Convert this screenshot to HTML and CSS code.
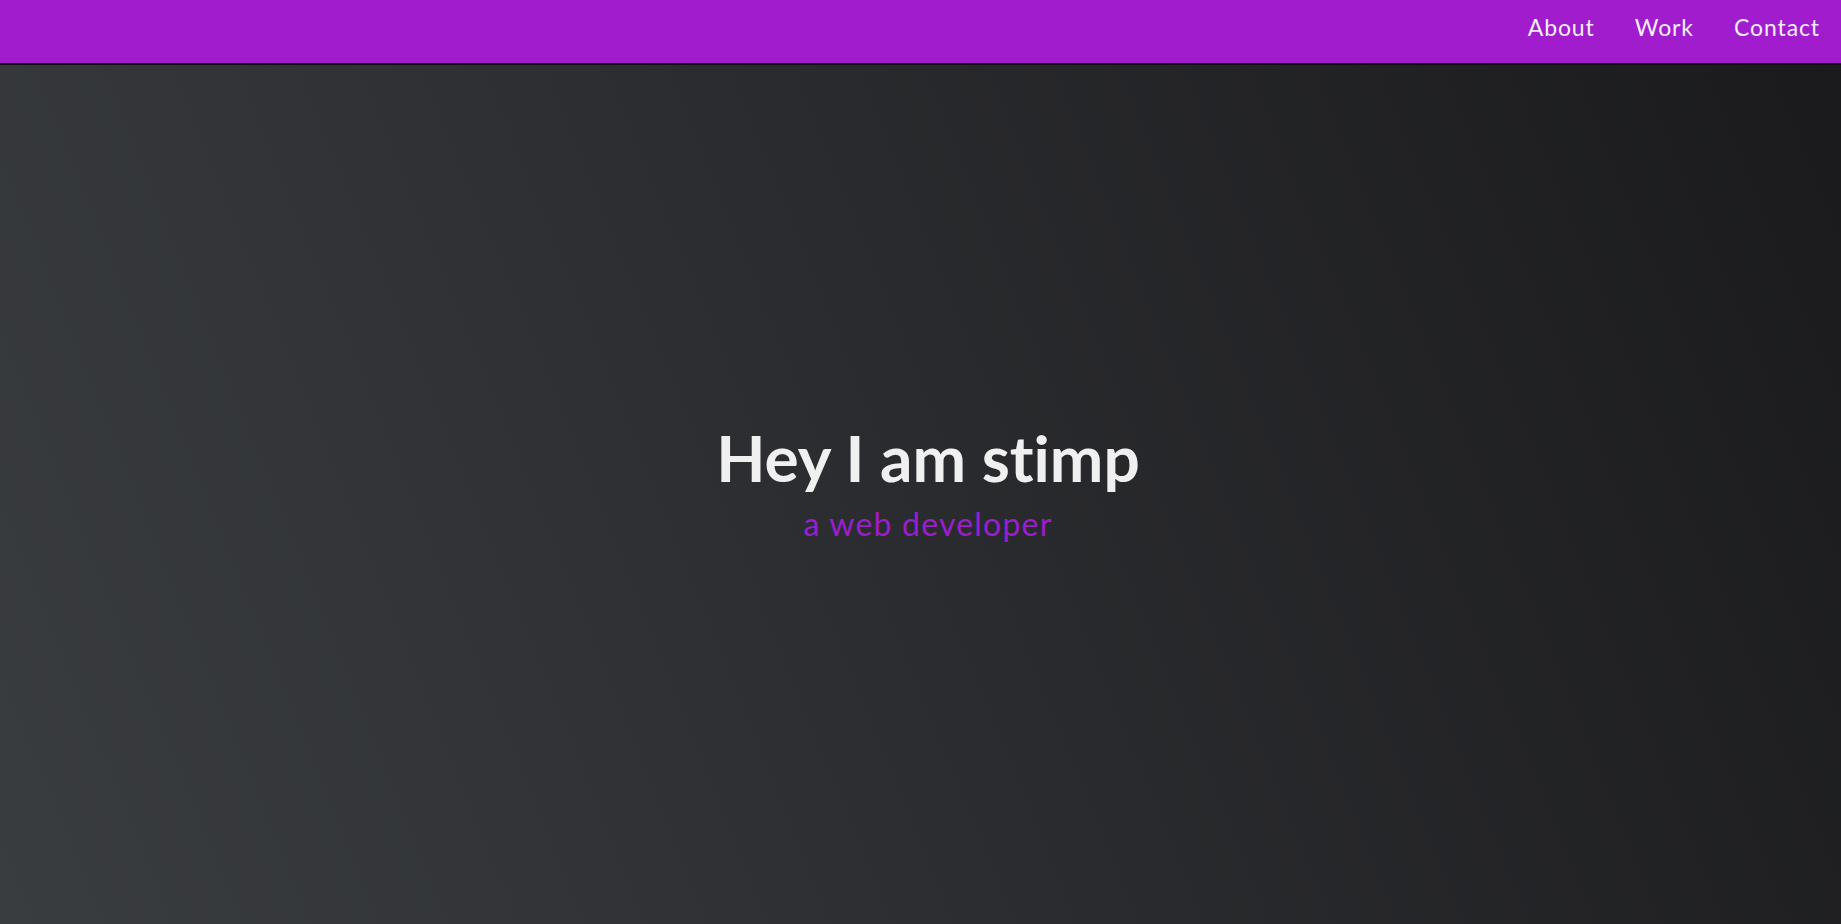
FILE: index.html
```html
<!DOCTYPE html>
<html lang="en">
<head>
<meta charset="utf-8">
<title>stimp</title>
<link rel="stylesheet" href="styles.css">
</head>
<body>
<header class="nav">
  <nav class="nav-links">
    <a href="#about" class="nav-link">About</a>
    <a href="#work" class="nav-link">Work</a>
    <a href="#contact" class="nav-link">Contact</a>
  </nav>
</header>
<main class="hero">
  <div class="hero-text">
    <h1 class="hero-title">Hey I am stimp</h1>
    <p class="hero-sub">a web developer</p>
  </div>
</main>
</body>
</html>
```
FILE: styles.css
```css
* { box-sizing: border-box; }
html, body { margin: 0; padding: 0; height: 100%; }
body {
  display: flex;
  flex-direction: column;
  background: linear-gradient(68deg, #3a3d40 0%, #2a2b2e 50%, #1a1a1c 100%);
  font-family: "Lato", "Open Sans", sans-serif;
  font-variant-ligatures: none;
  overflow: hidden;
}
.nav {
  height: 65px;
  background: #a01ccd;
  border-bottom: 2px solid #0d0d0f;
  display: flex;
  justify-content: flex-end;
  align-items: center;
  padding-right: 21px;
  flex: none;
}
.nav-links {
  display: flex;
  gap: 40px;
  padding-bottom: 10px;
}
.nav-link {
  color: #f4eef8;
  text-decoration: none;
  font-family: "Lato", sans-serif;
  font-size: 23px;
  letter-spacing: 0.9px;
}
.hero {
  flex: 1;
  display: flex;
  align-items: center;
  justify-content: center;
  padding-left: 15px;
  padding-bottom: 23px;
}
.hero-text { text-align: center; }
.hero-title {
  margin: 0;
  color: #f0f0f0;
  font-family: "Lato", sans-serif;
  font-weight: 700;
  font-size: 64px;
  line-height: 1.1;
}
.hero-sub {
  margin: 11px 0 0;
  color: #9a1dce;
  font-family: "Lato", sans-serif;
  font-size: 32px;
  line-height: 1.2;
  letter-spacing: 1.2px;
}
```
